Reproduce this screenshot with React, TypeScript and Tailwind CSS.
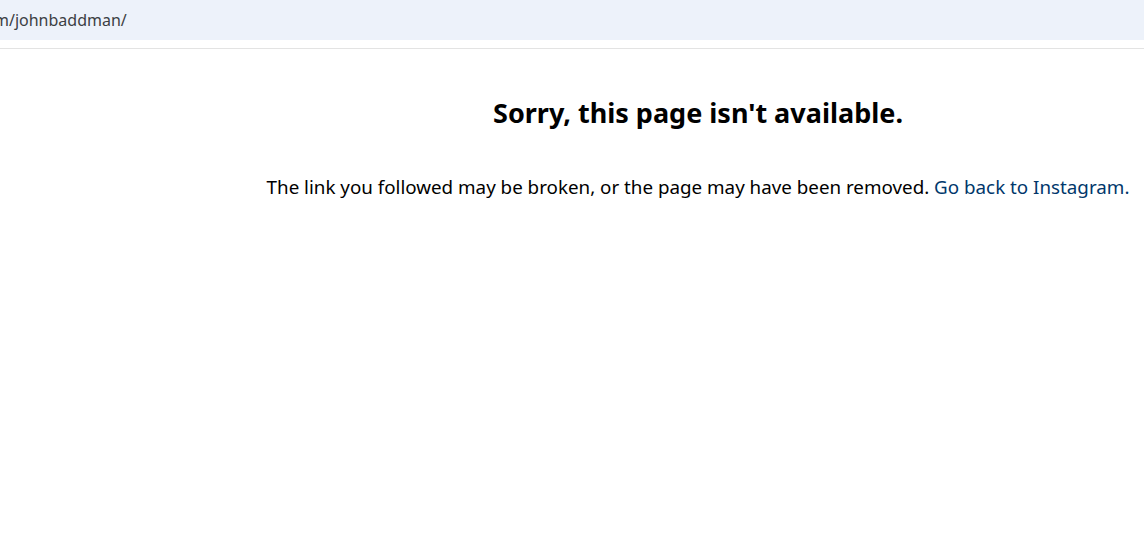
import React from 'react';

export default function App() {
  return (
    <div className="w-[1144px] h-[558px] bg-white overflow-hidden" style={{ fontFamily: '"Noto Sans", "Open Sans", sans-serif' }}>
      <div className="h-[40px] bg-[#edf2fa] flex items-center overflow-hidden">
        <span className="text-[16px] text-[#3c4043] -ml-[6px] whitespace-nowrap">m/johnbaddman/</span>
      </div>
      <div className="h-[8px]" />
      <div className="h-px bg-[#e3e3e3]" />
      <div className="flex flex-col items-center pl-[252px] pt-[46px]">
        <h2 className="text-[27px] font-bold text-black leading-[36px]">Sorry, this page isn't available.</h2>
        <p className="mt-[44px] text-[18.8px] text-black leading-[24px] whitespace-nowrap">
          The link you followed may be broken, or the page may have been removed.{' '}
          <a className="text-[#00376b]">Go back to Instagram.</a>
        </p>
      </div>
    </div>
  );
}
